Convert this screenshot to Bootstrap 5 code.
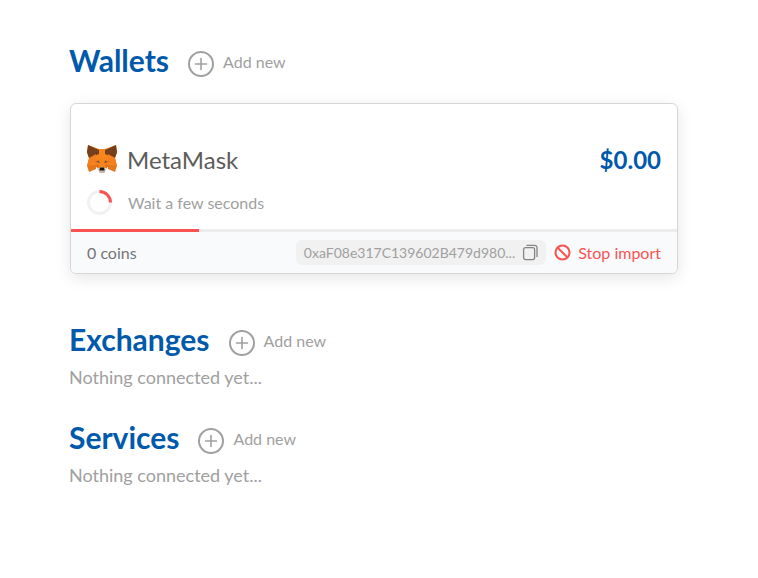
<!DOCTYPE html>
<html lang="en">
<head>
<meta charset="utf-8">
<meta name="viewport" content="width=device-width, initial-scale=1">
<title>Wallets</title>
<link rel="stylesheet" href="https://cdn.jsdelivr.net/npm/bootstrap@5.3.0/dist/css/bootstrap.min.css">
<style>
  body { font-family: Lato, sans-serif; color: #5c5c5c; background: #fff; }
  .page { padding: 40px 80px 40px 69px; }
  .section-title { font-size: 30px; line-height: 40px; font-weight: 700; color: #0059aa; }
  .head-row { gap: 19px; }
  .add-btn { gap: 9px; padding-top: 4px; font-size: 16px; line-height: 32px; color: #a0a0a0; }
  .add-btn svg { margin-top: 3px; }
  .empty-note { font-size: 18px; line-height: 24px; margin-top: 6px; color: #a0a0a0; }
  .section-gap { margin-top: 28px; }
  .wallet-card { margin: 23px 0 45px 1px; border: 1px solid #d6d6d6; border-radius: 6px; box-shadow: 0 4px 16px rgba(0,0,0,.1); }
  .wallet-body { padding: 36px 16px 13px; }
  .wallet-line { gap: 10px; line-height: 40px; }
  .wallet-line svg { margin-bottom: 2px; }
  .wallet-name { font-size: 24px; line-height: 40px; font-weight: 400; }
  .wallet-total { font-size: 24px; font-weight: 700; color: #0059aa; }
  .wait-line { gap: 15px; line-height: 26px; margin-top: 10px; color: #a0a0a0; }
  .import-progress { height: 3px; border-radius: 0; background: #ededed; }
  .import-progress .progress-bar { background: #fa5252; }
  .wallet-foot { padding: 8px 16px; gap: 8px; line-height: 25px; background: #f8fafc; color: #757575; border-radius: 0 0 5px 5px; }
  .address { gap: 7px; padding: 0 7px 0 8px; border-radius: 6px; background: #f1f1f1; color: #a0a0a0; font-size: 14px; line-height: 25px; }
  .stop-btn { gap: 7px; color: #fa5252; line-height: 25px; }
</style>
<script defer src="https://cdn.jsdelivr.net/npm/bootstrap@5.3.0/dist/js/bootstrap.bundle.min.js"></script>
</head>
<body>
<svg class="d-none" aria-hidden="true">
  <symbol id="plus" viewBox="0 0 26 26"><circle cx="13" cy="13" r="12" fill="none" stroke="#a0a0a0" stroke-width="2"/><path d="M13 7.500v11M7.500 13h11" stroke="#a0a0a0" stroke-width="1.600" stroke-linecap="round"/></symbol>
</svg>
<main class="page">
  <section>
    <div class="head-row d-flex">
      <h2 class="section-title mb-0">Wallets</h2>
      <button type="button" class="add-btn d-flex align-items-center border-0 bg-transparent pb-0 px-0"><svg width="26" height="26" aria-hidden="true"><use href="#plus"/></svg>Add new</button>
    </div>
    <article class="wallet-card bg-white">
      <div class="wallet-body">
        <div class="wallet-line d-flex align-items-center">
          <svg width="30" height="28" viewBox="0 0 30 28" aria-hidden="true">
            <path d="M1 0l11 4h6l11-4 1 8-2 5 2 8-2 2-8-1-3 2h-4l-3-2-8 1-2-2 2-8-2-5z" fill="#f6851b"/>
            <path d="M1 0l11 5v4L2 13 0 7zM29 0L18 5v4l10 4 2-6z" fill="#763e1a"/>
            <path d="M2 13l7-4-1 8-8 4zM28 13l-7-4 1 8 8 4z" fill="#f37f20"/>
            <path d="M0 20.500l9-.5v4l-7 3zM30 20.500l-9-.5v4l7 3z" fill="#e4761b"/>
            <path d="M7 17l5-2 1 3zM23 17l-5-2-1 3z" fill="#d56a22"/>
            <path d="M9.500 16.500l2.500 0 .5 1.500zM20.500 16.500l-2.500 0-.5 1.500z" fill="#3d4655"/>
            <path d="M8 20l4-1-1 5zM22 20l-4-1 1 5z" fill="#e0701d"/>
            <path d="M11 24l3-2h2l3 2-1.500 4h-5z" fill="#c9b8ab"/>
            <path d="M13 22.500h4l.5 3h-5z" fill="#171717"/>
          </svg>
          <h3 class="wallet-name mb-0">MetaMask</h3>
          <span class="wallet-total ms-auto">$0.00</span>
        </div>
        <div class="wait-line d-flex align-items-center" role="status">
          <svg width="26" height="26" viewBox="0 0 26 26" fill="none" stroke-width="3" aria-hidden="true"><circle cx="12.500" cy="12.500" r="11" stroke="#f1f1f1"/><path d="M12.500 1.500a11 11 0 0 1 11 11" stroke="#fa5252"/></svg>
          Wait a few seconds
        </div>
      </div>
      <div class="progress import-progress" role="progressbar" aria-label="Import progress" aria-valuenow="21" aria-valuemin="0" aria-valuemax="100"><div class="progress-bar" style="width: 21.1%"></div></div>
      <div class="wallet-foot d-flex align-items-center">
        <span class="me-auto">0 coins</span>
        <button type="button" class="address border-0 d-flex align-items-center">0xaF08e317C139602B479d980...
          <svg width="17" height="17" viewBox="0 0 17 17" fill="none" stroke="#858585" stroke-width="1.300" aria-hidden="true"><rect x="1.600" y="3.600" width="11" height="12" rx="2"/><path d="M4.500 1.300h8.200a2.300 2.300 0 0 1 2.300 2.300v9.400"/></svg>
        </button>
        <button type="button" class="stop-btn border-0 bg-transparent p-0 d-flex align-items-center"><svg width="17" height="17" viewBox="0 0 17 17" fill="none" stroke="#fa5252" stroke-width="2" aria-hidden="true"><circle cx="8.500" cy="8.500" r="7"/><path d="M3.500 3.500l10 10"/></svg>Stop import</button>
      </div>
    </article>
  </section>
  <section>
    <div class="head-row d-flex">
      <h2 class="section-title mb-0">Exchanges</h2>
      <button type="button" class="add-btn d-flex align-items-center border-0 bg-transparent pb-0 px-0"><svg width="26" height="26" aria-hidden="true"><use href="#plus"/></svg>Add new</button>
    </div>
    <p class="empty-note mb-0">Nothing connected yet...</p>
  </section>
  <section class="section-gap">
    <div class="head-row d-flex">
      <h2 class="section-title mb-0">Services</h2>
      <button type="button" class="add-btn d-flex align-items-center border-0 bg-transparent pb-0 px-0"><svg width="26" height="26" aria-hidden="true"><use href="#plus"/></svg>Add new</button>
    </div>
    <p class="empty-note mb-0">Nothing connected yet...</p>
  </section>
</main>
</body>
</html>
